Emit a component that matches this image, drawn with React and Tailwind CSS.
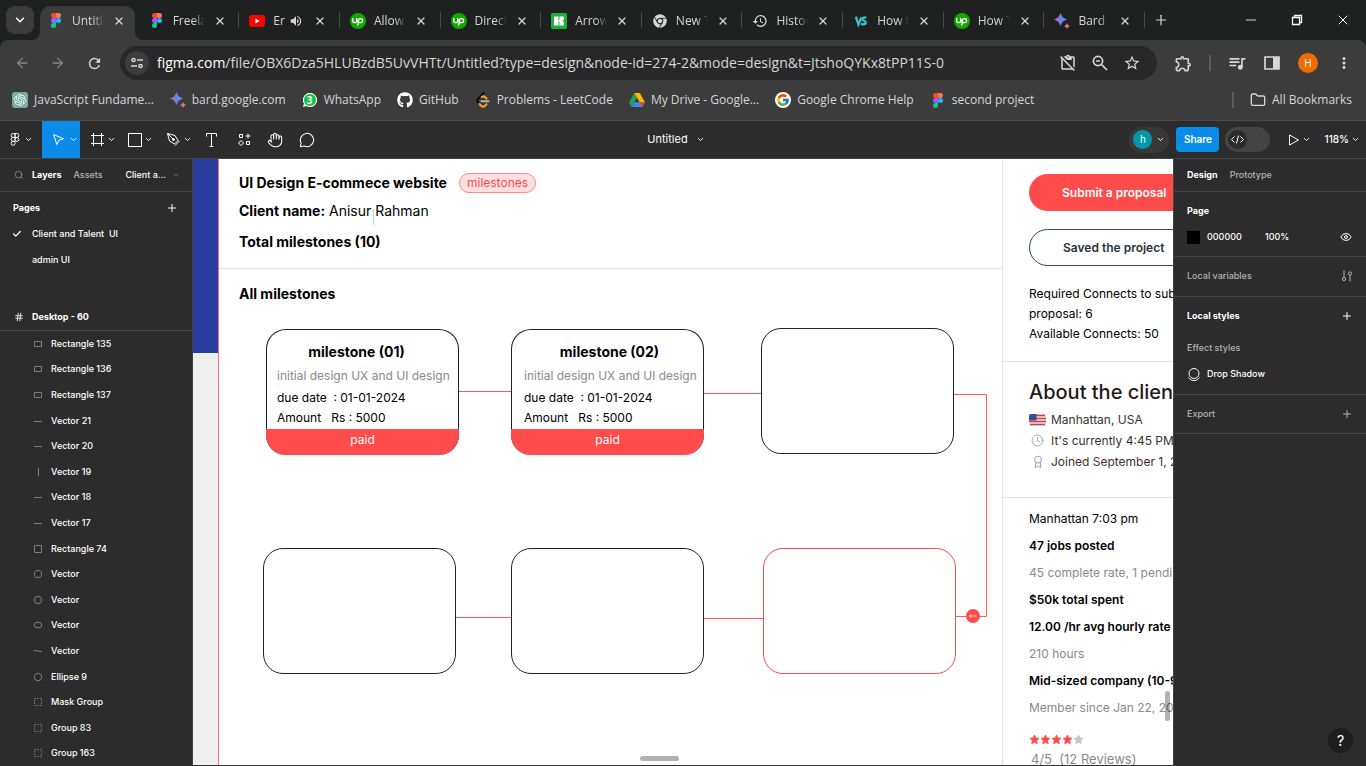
import React from "react";
import { ChevronDown, ChevronUp, X, Plus, Search, Check, Hash, Hand, MessageCircle, Folder, Clock, Award, Minus, Eye } from "lucide-react";
import { MdArrowBack, MdArrowForward, MdRefresh, MdOutlineExtension, MdQueueMusic, MdMoreVert, MdStarBorder, MdHistory, MdContentPasteOff, MdVolumeUp } from "react-icons/md";
import { FaGithub, FaChrome, FaWhatsapp } from "react-icons/fa";
import { FcGoogle } from "react-icons/fc";
import { SiOpenai } from "react-icons/si";

function FigmaLogo() {
  return (
    <svg viewBox="0 0 10 15" className="h-[15px] w-[10px]" aria-hidden="true">
      <path d="M2.5 0H5v5H2.5a2.5 2.5 0 0 1 0-5z" fill="#f24e1e" />
      <path d="M5 0h2.5a2.5 2.5 0 0 1 0 5H5z" fill="#ff7262" />
      <path d="M2.5 5H5v5H2.5a2.5 2.5 0 0 1 0-5z" fill="#a259ff" />
      <circle cx="7.5" cy="7.5" r="2.5" fill="#1abcfe" />
      <path d="M2.5 10H5v2.5A2.5 2.5 0 1 1 2.5 10z" fill="#0acf83" />
    </svg>
  );
}

function YoutubeLogo() {
  return (
    <svg viewBox="0 0 16 12" className="h-3 w-4" aria-hidden="true">
      <rect width="16" height="12" rx="3" fill="#f00" />
      <path d="M6.3 3.4v5.2L10.8 6z" fill="#fff" />
    </svg>
  );
}

function UpworkLogo() {
  return (
    <svg viewBox="0 0 16 16" className="size-4" aria-hidden="true">
      <circle cx="8" cy="8" r="8" fill="#14a800" />
      <path d="M2.800 5.500v2.300a1.900 1.900 0 0 0 3.800 0V5.500C7.200 7.600 8.200 9.700 10.500 9.700a2.050 2.050 0 1 0-2-2.300L7.700 12" fill="none" stroke="#fff" strokeWidth="1.300" strokeLinecap="round" strokeLinejoin="round" />
    </svg>
  );
}

function IconscoutLogo() {
  return (
    <svg viewBox="0 0 16 16" className="size-4" aria-hidden="true">
      <rect width="16" height="16" rx="1.5" fill="#1bb13c" />
      <path d="M3 3.500h4.500v9H3z" fill="#fff" />
      <path d="M8.500 3.500h4.300v3.200L11.500 8l1.300 1.300v3.200H8.500V9L7.500 8l1-1z" fill="#fff" />
    </svg>
  );
}

function BardLogo() {
  return (
    <svg viewBox="0 0 16 16" className="size-4" aria-hidden="true">
      <defs>
        <linearGradient id="bard" x1="0" x2="1" y1="0.500" y2="0.500">
          <stop offset="0" stopColor="#f0626b" />
          <stop offset="0.400" stopColor="#7b7be0" />
          <stop offset="1" stopColor="#3fa0ee" />
        </linearGradient>
      </defs>
      <path d="M6.500 0C7.600 3.500 9.500 5.400 13 6.500 9.500 7.600 7.600 9.500 6.500 13 5.400 9.500 3.500 7.600 0 6.500 3.500 5.400 5.400 3.500 6.500 0z" fill="url(#bard)" />
      <path d="M13 10c.5 1.500 1.500 2.500 3 3-1.500.5-2.500 1.500-3 3-.5-1.500-1.500-2.500-3-3 1.500-.5 2.500-1.500 3-3z" fill="#e2728f" />
    </svg>
  );
}

function VsLogo() {
  return (
    <svg viewBox="0 0 14 12" className="h-3 w-3" fill="none" stroke="#35c0c8" strokeWidth="2.800" aria-hidden="true">
      <path d="M1 1l3 9L7.500 2" />
      <path d="M13 2.500C11 1 8.500 2 8.800 4s4 1.600 3.700 4-3.500 2.500-5.500 1" />
    </svg>
  );
}

function DriveLogo() {
  return (
    <svg viewBox="0 0 16 14" className="h-[14px] w-4" aria-hidden="true">
      <path d="M5.300 0h5.400L8 4.700z" fill="#188038" />
      <path d="M5.300 0L8 4.700 2.700 14 0 9.300z" fill="#1ea362" />
      <path d="M10.700 0L16 9.300h-5.400L5.300 0z" fill="#ffba00" />
      <path d="M5.400 9.300H16L13.300 14H2.700z" fill="#4285f4" />
      <path d="M10.600 9.300H16L13.300 14z" fill="#ea4335" />
    </svg>
  );
}

function LeetCodeLogo() {
  return (
    <svg viewBox="0 0 16 16" className="size-4" fill="none" strokeWidth="2" strokeLinecap="round" aria-hidden="true">
      <path d="M8.800 1L3 6.800a2.500 2.500 0 0 0 0 3.500l1.500 1.700" stroke="#0c0c0c" />
      <path d="M11.500 6.500L10 5a2.500 2.500 0 0 0-3.200 0M4.500 12l1.700 1.700a2.700 2.700 0 0 0 3.800 0l1.500-1.500" stroke="#ffa116" />
      <path d="M6.500 9.200h7" stroke="#b3b3b3" />
    </svg>
  );
}

function WhatsappLogo() {
  return (
    <span className="relative flex size-4 items-center justify-center">
      <FaWhatsapp className="absolute size-4 text-white" />
      <span className="relative flex size-[14px] items-center justify-center rounded-full border border-white bg-[#12c344] text-[10px] leading-none font-bold text-white">3</span>
    </span>
  );
}

const tabs = [
  { icon: <FigmaLogo />, label: "Untitled", active: true },
  { icon: <FigmaLogo />, label: "Freelance" },
  { icon: <YoutubeLogo />, label: "Er", audio: true },
  { icon: <UpworkLogo />, label: "Allow" },
  { icon: <UpworkLogo />, label: "Direct" },
  { icon: <IconscoutLogo />, label: "Arrow" },
  { icon: <FaChrome className="size-[14px]" />, label: "New Tab" },
  { icon: <MdHistory className="size-4" />, label: "History" },
  { icon: <VsLogo />, label: "How to" },
  { icon: <UpworkLogo />, label: "How T" },
  { icon: <BardLogo />, label: "Bard" },
];

function BrowserTab({ tab }) {
  return (
    <div className="relative flex min-w-0 flex-1 items-center pt-[6px]">
      <div className={tab.active ? "relative flex h-[34px] w-[95px] items-center rounded-t-[10px] bg-[#3c3c3c] pb-[5px] pl-2" : "relative flex h-[34px] w-[95px] items-center pb-[5px] pl-2"}>
        {tab.active && (
          <>
            <svg viewBox="0 0 8 8" className="absolute bottom-0 -left-2 size-2 text-[#3c3c3c]" aria-hidden="true"><path d="M8 0v8H0a8 8 0 0 0 8-8z" fill="currentColor" /></svg>
            <svg viewBox="0 0 8 8" className="absolute -right-2 bottom-0 size-2 text-[#3c3c3c]" aria-hidden="true"><path d="M0 0v8h8a8 8 0 0 1-8-8z" fill="currentColor" /></svg>
          </>
        )}
        <span className="flex w-4 shrink-0 justify-center">{tab.icon}</span>
        <a href="#tab" className={tab.audio ? "ml-2 w-4 overflow-hidden text-[12px] leading-[18px] whitespace-nowrap" : "ml-2 w-[32px] overflow-hidden text-[12px] leading-[18px] whitespace-nowrap [mask-image:linear-gradient(to_right,black_65%,transparent)]"}>{tab.label}</a>
        {tab.audio && <MdVolumeUp className="size-[14px] shrink-0" />}
        <button aria-label="Close tab" className="mr-[10px] ml-auto shrink-0"><X className="size-3" strokeWidth={2.500} /></button>
      </div>
      {!tab.active && <span className="absolute top-3 right-[2px] h-4 w-px bg-[#4a4c4b]" />}
    </div>
  );
}

const bookmarks = [
  { icon: <span className="flex size-4 items-center justify-center rounded-[3px] bg-[#74aa9c] text-white"><SiOpenai className="size-3" /></span>, label: "JavaScript Fundame..." },
  { icon: <BardLogo />, label: "bard.google.com" },
  { icon: <WhatsappLogo />, label: "WhatsApp" },
  { icon: <FaGithub className="size-4 text-white" />, label: "GitHub" },
  { icon: <LeetCodeLogo />, label: "Problems - LeetCode" },
  { icon: <DriveLogo />, label: "My Drive - Google..." },
  { icon: <span className="flex size-4 items-center justify-center rounded-full bg-white"><FcGoogle className="size-[14px]" /></span>, label: "Google Chrome Help" },
  { icon: <FigmaLogo />, label: "second project" },
];

function Browser() {
  return (
    <header className="bg-[#1f2120] font-['Open_Sans',sans-serif] text-[#d5d6d6]">
      <div className="flex h-10 items-stretch">
        <button aria-label="Search tabs" className="mt-[6px] ml-[6px] flex size-7 shrink-0 items-center justify-center rounded-[9px] bg-[#3c3c3c] text-white"><ChevronDown className="size-[14px]" strokeWidth={2.500} /></button>
        <nav className="ml-[6px] flex max-w-[1107px] min-w-0 flex-1">
          {tabs.map((t, i) => <BrowserTab key={i} tab={t} />)}
        </nav>
        <button aria-label="New tab" className="ml-[6px]"><Plus className="size-4" strokeWidth={1.800} /></button>
        <div className="ml-auto flex items-center gap-[30px] pr-[15px] text-white">
          <button aria-label="Minimize"><Minus className="size-4" strokeWidth={1.200} /></button>
          <button aria-label="Restore">
            <svg viewBox="0 0 16 16" className="size-4" fill="none" stroke="currentColor" aria-hidden="true"><path d="M3.500 5.500h7v7h-7zM5.500 5.500v-2h7v7h-2" strokeWidth="1.300" /></svg>
          </button>
          <button aria-label="Close window"><X className="size-4" strokeWidth={1.500} /></button>
        </div>
      </div>
      <div className="flex h-[46px] items-center rounded-t-[8px] bg-[#3c3c3c] pr-[13px]">
        <button aria-label="Back" className="ml-[14px] text-[#858585]"><MdArrowBack className="size-4" /></button>
        <button aria-label="Forward" className="ml-5 text-[#858585]"><MdArrowForward className="size-4" /></button>
        <button aria-label="Reload" className="ml-5"><MdRefresh className="size-[17px]" /></button>
        <div className="ml-[17px] flex h-[34px] min-w-0 flex-1 items-center rounded-full bg-[#282828] pr-4 pl-[5px]">
          <button aria-label="Site information" className="flex size-6 shrink-0 items-center justify-center rounded-full bg-[#3c3c3c]">
            <svg viewBox="0 0 14 14" className="size-[14px]" fill="none" stroke="currentColor" strokeWidth="1.500" aria-hidden="true"><circle cx="3.500" cy="4" r="1.600" /><path d="M7 4h6M1 10h6" /><circle cx="10.500" cy="10" r="1.600" /></svg>
          </button>
          <a href="#address" className="ml-2 min-w-0 flex-1 truncate text-[14px] leading-5"><span className="text-white">figma.com</span>/file/OBX6Dza5HLUBzdB5UvVHTt/Untitled?type=design&amp;node-id=274-2&amp;mode=design&amp;t=JtshoQYKx8tPP11S-0</a>
          <button aria-label="Clipboard blocked"><MdContentPasteOff className="size-[18px]" /></button>
          <button aria-label="Zoom" className="ml-[14px]">
            <svg viewBox="0 0 18 18" className="size-[18px]" fill="none" stroke="currentColor" strokeWidth="1.700" aria-hidden="true"><circle cx="7" cy="7" r="4.600" /><path d="M10.500 10.500l5.500 5.500M5 7h4" /></svg>
          </button>
          <button aria-label="Bookmark this tab" className="ml-[14px]"><MdStarBorder className="size-[18px]" /></button>
        </div>
        <button aria-label="Extensions" className="ml-[17px]"><MdOutlineExtension className="size-[19px]" /></button>
        <span className="ml-4 h-4 w-[2px] bg-[#5c5c5c]" />
        <button aria-label="Media" className="ml-4"><MdQueueMusic className="size-[20px]" /></button>
        <button aria-label="Side panel" className="ml-[17px]">
          <svg viewBox="0 0 16 16" className="size-4" aria-hidden="true"><path d="M1 2h14v12H1z" fill="none" stroke="currentColor" strokeWidth="1.700" /><path d="M9 2h6v12H9z" fill="currentColor" /></svg>
        </button>
        <button aria-label="Profile" className="ml-[18px] flex size-5 items-center justify-center rounded-full bg-[#f06c00] text-[10px] text-white">H</button>
        <button aria-label="Menu" className="ml-[17px]"><MdMoreVert className="size-[18px]" /></button>
      </div>
      <nav className="flex h-[35px] items-center gap-4 border-b border-[#4a4a4a] bg-[#3c3c3c] pr-[14px] pb-[6px] pl-3 text-[12px] leading-4">
        {bookmarks.map((b) => (
          <a key={b.label} href="#bookmark" className="flex shrink-0 items-center gap-[6px]"><span className="flex w-4 justify-center">{b.icon}</span>{b.label}</a>
        ))}
        <span className="ml-auto h-4 w-[2px] shrink-0 bg-[#5c5c5c]" />
        <a href="#all" className="flex shrink-0 items-center gap-[6px]"><Folder className="size-4" />All Bookmarks</a>
      </nav>
    </header>
  );
}

const Chevron = () => <ChevronDown className="size-[9px] shrink-0" strokeWidth={2.500} aria-hidden="true" />;

function EditorBar() {
  return (
    <div className="flex h-[38px] shrink-0 items-center border-b border-[#444] bg-[#2c2c2c] text-[11px] text-white">
      <div className="flex flex-1 items-center self-stretch">
        <button aria-label="Main menu" className="flex w-[42px] items-center gap-1 pl-[10px]">
          <svg viewBox="0 0 10 14" className="h-[13px] w-[10px]" fill="none" stroke="currentColor" aria-hidden="true"><path d="M5 .5H3a2 2 0 0 0 0 4.300h2zM5 .5h2a2 2 0 0 1 0 4.300H5zM5 4.800H3a2 2 0 0 0 0 4.300h2zM5 9.100H3a2.100 2.100 0 1 0 2 2.200z" /><circle cx="7" cy="7" r="2.100" /></svg>
          <Chevron />
        </button>
        <button aria-label="Move" className="flex w-[38px] items-center gap-1 self-stretch bg-[#0c8ce9] pl-[10px]">
          <svg viewBox="0 0 13 13" className="size-[13px] shrink-0" fill="none" stroke="currentColor" strokeLinejoin="round" aria-hidden="true"><path d="M1.500 1.500l10 4.300-4.600 1.400-2 4.300z" /></svg>
          <Chevron />
        </button>
        <button aria-label="Frame" className="ml-[10px] flex items-center gap-[2px]">
          <svg viewBox="0 0 15 15" className="size-[15px]" fill="none" stroke="currentColor" aria-hidden="true"><path d="M3.500 1v13M11.500 1v13M1 3.500h13M1 11.500h13" /></svg>
          <Chevron />
        </button>
        <button aria-label="Rectangle" className="ml-3 flex items-center gap-[2px]">
          <svg viewBox="0 0 14 14" className="size-[14px]" fill="none" stroke="currentColor" aria-hidden="true"><path d="M.5.500h13v13H.5z" /></svg>
          <Chevron />
        </button>
        <button aria-label="Pen" className="ml-[13px] flex items-center gap-[2px]">
          <svg viewBox="0 0 15 15" className="size-[15px]" fill="none" stroke="currentColor" strokeLinejoin="round" aria-hidden="true"><path d="M1.500 1.500l7.500 2 3 5-3.500 3.500-5-3zM1.500 1.500l5.500 5.500M9 13.500l4.500-4.500" /><circle cx="7.500" cy="7.500" r="1" fill="currentColor" /></svg>
          <Chevron />
        </button>
        <button aria-label="Text" className="ml-[13px]">
          <svg viewBox="0 0 13 14" className="h-[14px] w-[13px]" fill="none" stroke="currentColor" aria-hidden="true"><path d="M1.500 3.500v-3h10v3M6.500.500v13M4.500 13.500h4" /></svg>
        </button>
        <button aria-label="Resources" className="ml-5">
          <svg viewBox="0 0 13 13" className="size-[13px]" fill="none" stroke="currentColor" aria-hidden="true"><path d="M1.500 1.500h3v3h-3zM8.500 8.500h3v3h-3zM10 .5v5M7.500 3h5M3 7.500l2.500 2.500L3 12.500.5 10z" /></svg>
        </button>
        <button aria-label="Hand" className="ml-4"><Hand className="size-4" strokeWidth={1.600} /></button>
        <button aria-label="Comment" className="ml-4"><MessageCircle className="size-4" strokeWidth={1.600} /></button>
      </div>
      <button className="flex items-center gap-2 pr-2">Untitled <Chevron /></button>
      <div className="flex flex-1 items-center justify-end pr-[6px]">
        <button aria-label="Account" className="flex h-[26px] w-10 items-center gap-1 rounded-full bg-[#383838] pl-[4px]"><span className="flex size-[19px] items-center justify-center rounded-full bg-[#0097a7] text-[10px]">h</span><Chevron /></button>
        <button className="ml-[7px] h-[25px] w-[43px] rounded-[4px] bg-[#0c8ce9] text-[10px] font-semibold">Share</button>
        <button aria-label="Dev mode" role="switch" aria-checked="false" className="ml-[6px] flex h-[25px] w-[45px] items-center rounded-full bg-[#444] pl-[3px]">
          <span className="flex size-[19px] items-center justify-center rounded-full bg-[#2c2c2c]">
            <svg viewBox="0 0 13 9" className="h-[9px] w-[13px]" fill="none" stroke="currentColor" aria-hidden="true"><path d="M3.500 1.500l-3 3 3 3M9.500 1.500l3 3-3 3M7.500.500l-2 8" /></svg>
          </span>
        </button>
        <button aria-label="Present" className="ml-[18px] flex items-center gap-[2px]">
          <svg viewBox="0 0 12 12" className="size-3" fill="none" stroke="currentColor" strokeLinejoin="round" aria-hidden="true"><path d="M1.500 1l9 5-9 5z" /></svg>
          <Chevron />
        </button>
        <button className="ml-[13px] flex items-center gap-[2px] text-[10px] font-medium">118% <Chevron /></button>
      </div>
    </div>
  );
}

const layers = [
  ["flat", "Rectangle 135"], ["flat", "Rectangle 136"], ["flat", "Rectangle 137"],
  ["line", "Vector 21"], ["line", "Vector 20"], ["vertical", "Vector 19"], ["line", "Vector 18"], ["line", "Vector 17"],
  ["square", "Rectangle 74"], ["circle", "Vector"], ["circle", "Vector"], ["oval", "Vector"], ["slope", "Vector"],
  ["circle", "Ellipse 9"], ["group", "Mask Group"], ["group", "Group 83"], ["group", "Group 163"],
];

function LayerIcon({ kind }) {
  return (
    <svg viewBox="0 0 10 10" className="size-[10px] text-[#7d7d7d]" fill="none" stroke="currentColor" aria-hidden="true">
      {kind === "flat" && <path d="M1.500 2.500h7v5h-7z" />}
      {kind === "square" && <path d="M1.500 1.500h7v7h-7z" />}
      {kind === "line" && <path d="M1 5.500h8" />}
      {kind === "vertical" && <path d="M5.500 1v8" />}
      {kind === "slope" && <path d="M1 4.500l8 1" />}
      {kind === "circle" && <circle cx="5" cy="5" r="3.700" />}
      {kind === "oval" && <ellipse cx="5" cy="5" rx="3.800" ry="2.900" />}
      {kind === "group" && <path d="M1.500 1.500h7v7h-7z" strokeDasharray="1.500 1.300" />}
    </svg>
  );
}

function LayersPanel() {
  return (
    <aside className="flex w-[193px] shrink-0 flex-col border-r border-[#444] bg-[#2c2c2c] text-[9px] leading-4 font-medium text-white">
      <div className="flex h-[33px] items-center border-b border-[#444] pr-3 pl-[14px]">
        <Search className="size-[10px] text-[#8c8c8c]" aria-hidden="true" />
        <button className="ml-2 font-bold">Layers</button>
        <button className="ml-3 text-[#b3b3b3]">Assets</button>
        <button className="ml-auto flex items-center gap-[6px]">Client a... <ChevronUp className="size-2 text-[#8c8c8c]" /></button>
      </div>
      <div className="mt-[3px] flex h-[26px] items-center justify-between pr-[14px] pl-[13px]">
        <h2 className="font-bold">Pages</h2>
        <button aria-label="Add page"><Plus className="size-3" strokeWidth={2} /></button>
      </div>
      <ul>
        <li className="flex h-[26px] items-center pl-3"><Check className="size-[10px]" strokeWidth={3} /><a href="#client" className="ml-[10px] whitespace-pre">Client and Talent  UI</a></li>
        <li className="flex h-[26px] items-center pl-8"><a href="#admin">admin UI</a></li>
      </ul>
      <div className="mt-[30px] flex h-7 shrink-0 items-center gap-2 border-b border-[#444] pl-[14px]"><Hash className="size-[10px]" /><h2 className="font-bold">Desktop - 60</h2></div>
      <ul className="flex flex-1 flex-col">
        {layers.map(([kind, name], i) => (
          <li key={i} className="flex min-h-[22px] flex-1 items-center gap-2 pl-[33px]"><LayerIcon kind={kind} /><a href="#layer">{name}</a></li>
        ))}
      </ul>
    </aside>
  );
}

function DesignPanel() {
  return (
    <aside className="flex w-[193px] shrink-0 flex-col border-l border-[#444] bg-[#2c2c2c] text-[9px] leading-4 font-medium text-white">
      <div className="flex h-[33px] items-center gap-3 border-b border-[#444] pl-[13px]">
        <button className="font-bold">Design</button>
        <button className="text-[#b3b3b3]">Prototype</button>
      </div>
      <section className="h-[65px] border-b border-[#444] pt-[6px] pr-[14px] pl-[13px]">
        <h2 className="flex h-[26px] items-center font-bold">Page</h2>
        <div className="flex h-[26px] items-center">
          <button aria-label="Page colour" className="size-[13px] bg-black" />
          <input aria-label="Hex" defaultValue="000000" className="ml-[7px] w-[58px] bg-transparent outline-none" />
          <input aria-label="Opacity" defaultValue="100%" className="w-10 bg-transparent outline-none" />
          <button aria-label="Toggle visibility" className="ml-auto"><Eye className="size-3" /></button>
        </div>
      </section>
      <section className="flex h-10 items-center justify-between border-b border-[#444] pr-[13px] pb-[2px] pl-[13px] text-[#b3b3b3]">
        <h2>Local variables</h2>
        <button aria-label="Open variables">
          <svg viewBox="0 0 12 12" className="size-3" fill="none" stroke="currentColor" aria-hidden="true"><path d="M3 .5v7M9 5v6.500" /><circle cx="3" cy="9" r="1.600" /><circle cx="9" cy="3.500" r="1.600" /></svg>
        </button>
      </section>
      <section className="h-[98px] border-b border-[#444] pt-[6px] pr-[13px] pl-[13px]">
        <div className="flex h-[26px] items-center justify-between"><h2 className="font-bold">Local styles</h2><button aria-label="Add style"><Plus className="size-3" /></button></div>
        <h3 className="mt-[6px] flex h-[26px] items-center text-[#b3b3b3]">Effect styles</h3>
        <button className="flex h-[26px] items-center gap-[6px]">
          <svg viewBox="0 0 14 14" className="size-[14px]" fill="none" stroke="currentColor" aria-hidden="true"><circle cx="7" cy="6.500" r="5" /><path d="M1.500 10.500a6.500 6.500 0 0 0 11 0" /></svg>
          Drop Shadow
        </button>
      </section>
      <section className="flex h-[39px] items-center justify-between border-b border-[#444] pr-[13px] pl-[13px] text-[#b3b3b3]"><h2>Export</h2><button aria-label="Add export"><Plus className="size-3" /></button></section>
      <button aria-label="Help" className="mt-auto mr-[13px] mb-[13px] flex size-[25px] items-center justify-center self-end rounded-full bg-[#1e1e1e] text-[15px] font-normal">?</button>
    </aside>
  );
}

function Milestone({ place, title, titleInset, textInset, accent }) {
  return (
    <article className={`absolute flex h-[126px] w-[193px] flex-col overflow-hidden rounded-[20px] border bg-white ${accent ? "border-[#ff4b4b]" : "border-[#222]"} ${title ? "border-b-0" : ""} ${place}`}>
      {title && (
        <>
          <h3 className={`mt-[14px] text-center text-[14px] leading-4 font-bold ${titleInset}`}>{title}</h3>
          <div className={`mt-2 text-[12px] ${textInset}`}>
            <p className="leading-4 whitespace-nowrap text-[#8a8a8a]">initial design UX and UI design</p>
            <p className="mt-1 leading-5 whitespace-pre">due date  : 01-01-2024</p>
            <p className="leading-5 whitespace-pre">Amount   Rs : 5000</p>
          </div>
        </>
      )}
    </article>
  );
}

function PaidFooter({ place }) {
  return <div className={`absolute h-[26px] w-[193px] rounded-b-[20px] bg-[#ff4b4b] text-center text-[12px] leading-[22px] text-white ${place}`}>paid</div>;
}

function RatingStar({ filled }) {
  return (
    <svg viewBox="0 0 11 11" className={filled ? "size-[11px] text-[#ff4b4b]" : "size-[11px] text-[#c4c4c4]"} aria-hidden="true">
      <path d="M5.500 1l1.400 2.900 3.100.4-2.300 2.200.6 3.200-2.800-1.500-2.800 1.500.6-3.200L1 4.300l3.100-.4z" fill="currentColor" stroke="currentColor" strokeWidth="0.800" strokeLinejoin="round" />
    </svg>
  );
}

function Canvas() {
  return (
    <main className="relative flex min-w-0 flex-1 overflow-hidden border-b border-[#333] bg-white text-black">
      <div className="flex w-[25px] shrink-0 flex-col bg-[#efefef]"><div className="h-[194px] bg-[#283fa0]" /></div>
      <section className="flex w-[784px] shrink-0 flex-col border-l border-[#ff6b78]">
        <div className="flex h-[110px] flex-col border-b border-[#e2e2e2] pt-[14px] pl-5 text-[14px] leading-5">
          <div className="flex items-center gap-3">
            <h1 className="font-bold">UI Design E-commece website</h1>
            <span className="rounded-full border border-[#ff8a8a] bg-[#ffe0e0] px-[7px] text-[12px] leading-[18px] text-[#ff4b4b]">milestones</span>
          </div>
          <p className="mt-2"><strong>Client name:</strong> Anisur Rahman</p>
          <p className="mt-[11px] font-bold">Total milestones (10)</p>
        </div>
        <h2 className="mt-[15px] pl-5 text-[14px] leading-5 font-bold">All milestones</h2>
        <div className="relative flex-1">
          <svg viewBox="0 0 783 462" className="absolute top-0 left-0 h-[462px] w-[783px]" fill="none" stroke="#ff5c5c" aria-hidden="true">
            <path d="M239 87.500h54M484 89.500h58M733 90.500h34.500v222H737M235 313.500h58M484 314.500h61" />
          </svg>
          <svg viewBox="0 0 14 14" className="absolute top-[305px] left-[747px] size-[14px]" aria-hidden="true"><circle cx="7" cy="7" r="7" fill="#ff4b4b" /><path d="M11 7H3.500M5.500 5l-2 2 2 2" fill="none" stroke="#ffd0d0" /></svg>
          <Milestone place="top-[25px] left-[47px]" title="milestone (01)" titleInset="pr-3" textInset="pl-[10px]" />
          <PaidFooter place="top-[125px] left-[47px]" />
          <Milestone place="top-[25px] left-[292px]" title="milestone (02)" titleInset="pl-1" textInset="pl-3" />
          <PaidFooter place="top-[125px] left-[292px]" />
          <Milestone place="top-[24px] left-[542px]" />
          <Milestone place="top-[244px] left-[44px]" />
          <Milestone place="top-[244px] left-[292px]" />
          <Milestone place="top-[244px] left-[544px]" accent />
        </div>
      </section>
      <section className="w-[320px] shrink-0 border-l border-[#e2e2e2] text-[12px] whitespace-nowrap">
        <div className="border-b border-[#e2e2e2] px-[26px] pt-[15px] pb-[17px] font-semibold">
          <button className="block h-[37px] w-full rounded-full bg-[#ff4b4b] pl-[33px] text-left text-white">Submit a proposal</button>
          <button className="mt-[18px] block h-[37px] w-full rounded-full border border-[#37474f] pl-[33px] text-left text-[#263238]">Saved the project</button>
          <p className="mt-[18px] leading-5 font-normal">Required Connects to submit a<br />proposal: 6<br />Available Connects: 50</p>
        </div>
        <div className="h-[136px] border-b border-[#e2e2e2] pt-[18px] pl-[26px] text-[#3b3330]">
          <h2 className="text-[20px] leading-6 font-medium text-[#231a17]">About the client</h2>
          <ul className="mt-[5px] leading-[21px]">
            <li className="flex items-center gap-[5px]">
              <svg viewBox="0 0 17 12" className="h-3 w-[17px]" aria-hidden="true"><rect width="17" height="12" rx="2.500" fill="#f3e6e6" /><path d="M1 1.500h15M0 4.500h17M0 7.500h17M1 10.500h15" stroke="#c8414b" strokeWidth="1.400" /><path d="M2 0h5.500v6.500H0V2a2 2 0 0 1 2-2z" fill="#3d4b8f" /></svg>
              Manhattan, USA
            </li>
            <li className="flex items-center gap-[5px]"><span className="flex w-[17px] justify-center text-[#999]"><Clock className="size-[13px]" strokeWidth={1.600} /></span>It's currently 4:45 PM</li>
            <li className="flex items-center gap-[5px]"><span className="flex w-[17px] justify-center text-[#999]"><Award className="size-[14px]" strokeWidth={1.600} /></span>Joined September 1, 2022</li>
          </ul>
        </div>
        <div className="flex flex-col gap-[11px] pt-[13px] pl-[26px] leading-4">
          <p>Manhattan 7:03 pm</p>
          <p className="font-semibold">47 jobs posted</p>
          <p className="text-[#8a8a8a]">45 complete rate, 1 pending</p>
          <p className="font-semibold">$50k total spent</p>
          <p className="font-semibold">12.00 /hr avg hourly rate paid</p>
          <p className="text-[#8a8a8a]">210 hours</p>
          <p className="font-semibold">Mid-sized company (10-99 people)</p>
          <p className="text-[#8a8a8a]">Member since Jan 22, 2022</p>
        </div>
        <div className="mt-[18px] flex pl-[26px]">
          {[1, 2, 3, 4, 5].map((n) => <RatingStar key={n} filled={n <= 4} />)}
        </div>
        <p className="mt-1 -mb-4 pl-7 text-[13px] leading-5 whitespace-pre text-[#8a8a8a]">4/5  (12 Reviews)</p>
      </section>
      <span className="absolute top-[50px] left-[180px] h-4 w-px bg-[#ccc]" />
      <span className="absolute right-[3px] bottom-[44px] h-[30px] w-[5px] rounded-full bg-black/30" />
      <span className="absolute bottom-[4px] left-[447px] h-[5px] w-[39px] rounded-full bg-black/30" />
    </main>
  );
}

export default function App() {
  return (
    <div className="flex min-h-screen flex-col bg-[#2c2c2c] font-['Inter',sans-serif]">
      <Browser />
      <EditorBar />
      <div className="flex flex-1"><LayersPanel /><Canvas /><DesignPanel /></div>
    </div>
  );
}
